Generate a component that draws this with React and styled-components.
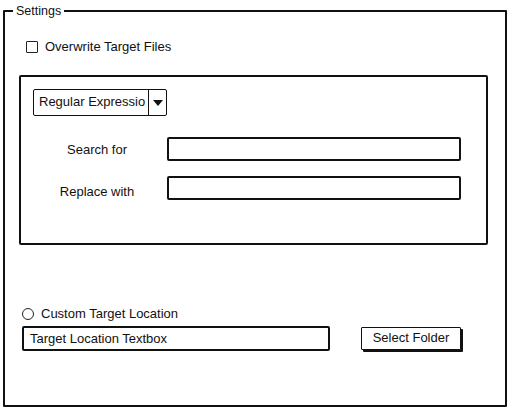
import React from 'react';
import styled, { createGlobalStyle } from 'styled-components';

const GlobalStyle = createGlobalStyle`
  html, body {
    margin: 0;
    padding: 0;
    background: #ffffff;
  }
  body {
    font-family: "Liberation Sans", Arial, sans-serif;
    color: #111;
  }
`;

const Frame = styled.fieldset`
  box-sizing: border-box;
  width: 504px;
  height: 403px;
  margin: 4px 0 0 3px;
  padding: 0;
  border: 2px solid #111;
  border-radius: 1px;
  min-width: 0;
`;

const Legend = styled.legend`
  margin-left: 8px;
  padding: 0 3px;
  font-size: 12.5px;
  line-height: 14px;
  color: #111;
`;

const Content = styled.div`
  display: flex;
  flex-direction: column;
  padding: 0 17px 0 14px;
`;

const Row = styled.label`
  display: flex;
  align-items: center;
  gap: ${p => p.$gap || 8}px;
  margin: ${p => p.$margin || '0'};
  font-size: 13px;
  line-height: 16px;
`;

const Check = styled.span`
  box-sizing: border-box;
  width: 12px;
  height: 12px;
  border: 1.5px solid #222;
  border-radius: 1px;
  background: #fff;
`;

const Radio = styled.span`
  box-sizing: border-box;
  width: 12px;
  height: 12px;
  border: 1.5px solid #222;
  border-radius: 50%;
  background: #fff;
`;

const Panel = styled.div`
  box-sizing: border-box;
  height: 170px;
  margin-top: 20px;
  border: 2px solid #111;
  border-radius: 2px;
  padding: 12px 12px 0 12px;
  display: flex;
  flex-direction: column;
`;

const Select = styled.div`
  box-sizing: border-box;
  display: flex;
  width: 134px;
  height: 27px;
  border: 1.5px solid #111;
  border-radius: 2px;
  background: #fff;
`;

const SelectText = styled.span`
  flex: 1;
  overflow: hidden;
  white-space: nowrap;
  padding: 0 0 0 5px;
  font-size: 13px;
  line-height: 24px;
`;

const SelectButton = styled.span`
  width: 17px;
  border-left: 1.5px solid #111;
  display: flex;
  align-items: center;
  justify-content: center;
`;

const Form = styled.div`
  display: grid;
  grid-template-columns: 128px 294px;
  column-gap: 6px;
  row-gap: 15px;
  margin-top: 21px;
  align-items: center;
`;

const FieldLabel = styled.span`
  text-align: center;
  font-size: 13px;
  margin-top: ${p => p.$shift || 0}px;
`;

const TextBox = styled.div`
  box-sizing: border-box;
  width: ${p => p.$width}px;
  height: ${p => p.$height || 24}px;
  border: 2px solid #111;
  border-radius: 2px;
  padding: 0 6px;
  font-size: 13px;
  line-height: ${p => (p.$height || 24) - 4}px;
  background: #fff;
`;

const BottomRow = styled.div`
  display: flex;
  align-items: flex-start;
  gap: 31px;
  margin-top: 4px;
  margin-left: 3px;
`;

const Button = styled.div`
  box-sizing: border-box;
  width: 100px;
  height: 23px;
  margin-top: 1px;
  border: 1.5px solid #111;
  border-radius: 1px;
  box-shadow: 2px 2px 0 #111;
  background: #fff;
  font-size: 13px;
  line-height: 20px;
  text-align: center;
`;

export default function App() {
  return (
    <>
      <GlobalStyle />
      <Frame>
        <Legend>Settings</Legend>
        <Content>
          <Row $margin="21px 0 0 7px" $gap={7}>
            <Check />
            Overwrite Target Files
          </Row>
          <Panel>
            <Select>
              <SelectText>Regular Expressio</SelectText>
              <SelectButton>
                <svg width="10" height="6" viewBox="0 0 10 6">
                  <polygon points="0,0 10,0 5,6" fill="#111" />
                </svg>
              </SelectButton>
            </Select>
            <Form>
              <FieldLabel>Search for</FieldLabel>
              <TextBox $width={294} />
              <FieldLabel $shift={6}>Replace with</FieldLabel>
              <TextBox $width={294} />
            </Form>
          </Panel>
          <Row $margin="61px 0 0 3px" $gap={7}>
            <Radio />
            Custom Target Location
          </Row>
          <BottomRow>
            <TextBox $width={308} $height={25}>Target Location Textbox</TextBox>
            <Button>Select Folder</Button>
          </BottomRow>
        </Content>
      </Frame>
    </>
  );
}
